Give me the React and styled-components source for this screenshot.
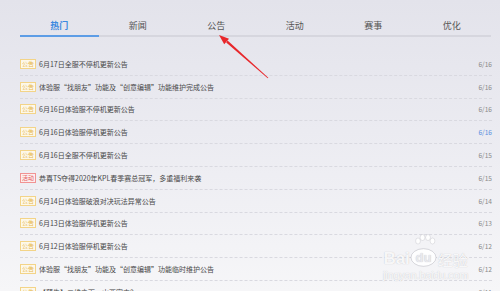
import styled, { createGlobalStyle } from "styled-components"

const GlobalStyle = createGlobalStyle`
    html, body {
        margin: 0;
        padding: 0;
    }
    body {
        width: 500px;
        height: 291px;
        overflow: hidden;
        font-family: "Noto Sans CJK SC", "Noto Sans", sans-serif;
    }
`

const Page = styled.main`
    position: relative;
    width: 500px;
    height: 291px;
    box-sizing: border-box;
    padding: 15px 8px 0 20px;
    overflow: hidden;
    background: linear-gradient(180deg, #e3e3eb 0%, #ebebf1 45%, #f6f6f8 100%);
`

const Tabs = styled.nav`
    display: grid;
    grid-template-columns: repeat(6, 1fr);
    width: 471px;
    border-bottom: 2px solid #d6d6de;
`

const Tab = styled.div`
    height: 20px;
    display: flex;
    align-items: center;
    justify-content: center;
    font-size: 9px;
    font-weight: ${p => (p.$active ? 700 : 400)};
    color: ${p => (p.$active ? "#3d8ae0" : "#555")};
    box-shadow: ${p => (p.$active ? "0 2px 0 #5d9de6" : "none")};
`

const List = styled.ul`
    list-style: none;
    margin: 16px 0 0 0;
    padding: 0;
`

const Row = styled.li`
    height: 22.8px;
    box-sizing: border-box;
    display: flex;
    align-items: center;
    gap: 3px;
    border-bottom: 1px dashed #d9d9e0;
`

const Badge = styled.span`
    flex: none;
    width: 16px;
    height: 10px;
    box-sizing: border-box;
    display: flex;
    align-items: center;
    justify-content: center;
    font-size: 6px;
    line-height: 1;
    border: 1px solid ${p => (p.$kind === "event" ? "#f19393" : "#f3d488")};
    background: ${p => (p.$kind === "event" ? "#fdeeee" : "#fdf8ea")};
    color: ${p => (p.$kind === "event" ? "#e45f5f" : "#e6b64c")};
`

const Title = styled.span`
    flex: 1;
    font-size: 7px;
    color: #474747;
    white-space: nowrap;
`

const Date = styled.span`
    font-size: 6.6px;
    color: ${p => (p.$hover ? "#5a90e0" : "#8a8a8a")};
`

const Arrow = styled.svg`
    position: absolute;
    left: 0;
    top: 0;
    pointer-events: none;
`

const Watermark = styled.div`
    position: absolute;
    left: 383px;
    top: 234px;
    display: flex;
    flex-direction: column;
    align-items: center;
    color: rgba(255, 255, 255, 0.9);
    text-shadow: 0 0 1px rgba(120, 120, 130, 0.45);
    font-family: "Liberation Sans", Arial, sans-serif;
`

const Brand = styled.div`
    display: flex;
    align-items: flex-end;
    margin-top: 14px;
    font-size: 17px;
    font-weight: 700;
    line-height: 1;
`

const BrandCn = styled.span`
    font-family: "Noto Sans CJK SC", sans-serif;
    font-size: 15px;
    font-weight: 400;
    margin-left: 1px;
`

const Domain = styled.div`
    font-size: 11px;
    margin-top: 2px;
    letter-spacing: -0.2px;
`

const Paw = styled.svg`
    position: absolute;
    left: 30px;
    top: 0;
`

const tabs = ["热门", "新闻", "公告", "活动", "赛事", "优化"]

const news = [
    { kind: "notice", title: "6月17日全服不停机更新公告", date: "6/16" },
    { kind: "notice", title: "体验服“找朋友”功能及“创意编辑”功能维护完成公告", date: "6/16" },
    { kind: "notice", title: "6月16日体验服不停机更新公告", date: "6/16" },
    { kind: "notice", title: "6月16日体验服停机更新公告", date: "6/16", hover: true },
    { kind: "notice", title: "6月16日全服不停机更新公告", date: "6/15" },
    { kind: "event", title: "恭喜TS夺得2020年KPL春季赛总冠军，多重福利来袭", date: "6/15" },
    { kind: "notice", title: "6月14日体验服破浪对决玩法异常公告", date: "6/14" },
    { kind: "notice", title: "6月13日体验服停机更新公告", date: "6/13" },
    { kind: "notice", title: "6月12日体验服停机更新公告", date: "6/12" },
    { kind: "notice", title: "体验服“找朋友”功能及“创意编辑”功能临时维护公告", date: "6/12" },
    { kind: "notice", title: "【预告】二维之面，山西密中？", date: "6/11" },
]

export default function App() {
    return (
        <Page>
            <GlobalStyle />
            <Tabs>
                {tabs.map((t, i) => (
                    <Tab key={t} $active={i === 0}>{t}</Tab>
                ))}
            </Tabs>
            <List>
                {news.map(item => (
                    <Row key={item.title + item.date}>
                        <Badge $kind={item.kind}>{item.kind === "event" ? "活动" : "公告"}</Badge>
                        <Title>{item.title}</Title>
                        <Date $hover={item.hover}>{item.date}</Date>
                    </Row>
                ))}
            </List>
            <Watermark>
                <Paw width="24" height="14" viewBox="0 0 24 14">
                    <g fill="rgba(255,255,255,0.9)" stroke="rgba(140,140,150,0.35)" strokeWidth="0.6">
                        <ellipse cx="5" cy="7" rx="2.4" ry="3" />
                        <ellipse cx="9.5" cy="3.5" rx="2.4" ry="3" />
                        <ellipse cx="15" cy="3.5" rx="2.4" ry="3" />
                        <ellipse cx="19.5" cy="7" rx="2.4" ry="3" />
                    </g>
                </Paw>
                <Brand>
                    Bai
                    <svg width="27" height="19" viewBox="0 0 27 19">
                        <ellipse cx="13.5" cy="9.5" rx="12.5" ry="8.8" fill="rgba(255,255,255,0.9)" stroke="rgba(140,140,150,0.4)" strokeWidth="0.8" />
                        <text x="13.5" y="14" textAnchor="middle" fontSize="13" fontWeight="700" fontFamily="Liberation Sans, sans-serif" fill="#e9e9ee">du</text>
                    </svg>
                    <BrandCn>经验</BrandCn>
                </Brand>
                <Domain>jingyan.baidu.com</Domain>
            </Watermark>
            <Arrow width="500" height="291" viewBox="0 0 500 291">
                <polygon points="268.3,77.7 267.7,78.3 226.2,42.4 227.6,40.6" fill="#e8272b" />
                <polygon points="219,35 229,38.8 224.2,44.2" fill="#e8272b" />
            </Arrow>
        </Page>
    )
}
